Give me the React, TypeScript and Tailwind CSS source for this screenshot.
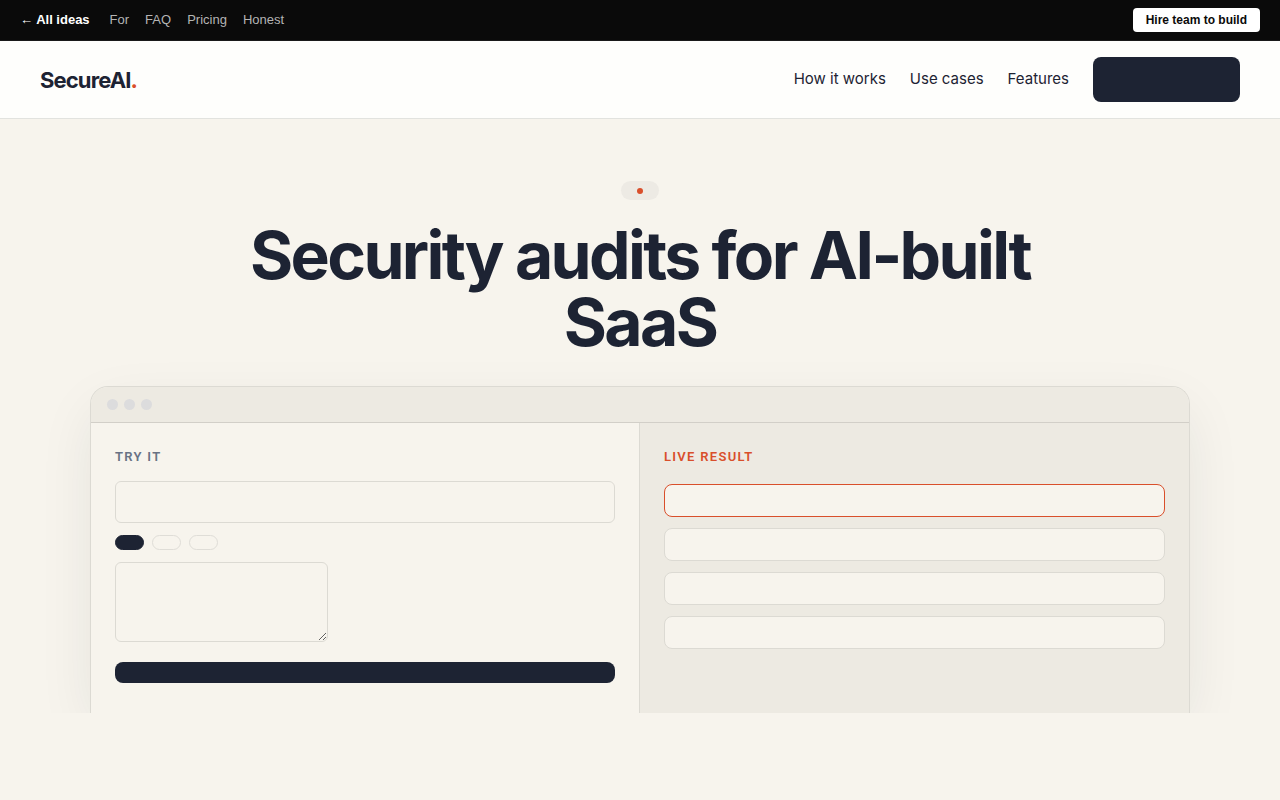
import React from 'react'

const topLinks = ['For', 'FAQ', 'Pricing', 'Honest'];
const navLinks = ['How it works', 'Use cases', 'Features'];
const chips = ['Repository', 'Website', 'API'];
const results = ['Critical', 'High', 'Medium', 'Low'];

const TopBar = () => {
    return (
        <div className="flex items-center justify-between border-b border-[#1a1a1a] bg-[#0a0a0a] px-5 py-2 font-['Liberation_Sans',sans-serif] text-[13px] leading-6">
            <div className="flex items-center gap-4">
                <a href="#" className="mr-1 font-bold text-white">← All ideas</a>
                {topLinks.map((link) => (
                    <a key={link} href="#" className="text-[#b4b4b4]">{link}</a>
                ))}
            </div>
            <a href="#" className="rounded bg-white px-[13px] text-xs leading-6 font-bold text-[#0a0a0a]">Hire team to build</a>
        </div>
    )
}

const Navbar = () => {
    return (
        <header className="flex items-center justify-between border-b border-[#e2e3df] bg-[#fefefc] px-10 py-4">
            <a href="#" className="text-[22px] leading-7 font-bold tracking-[-0.04em]">
                SecureAI<span className="text-[#d94f2b]">.</span>
            </a>
            <nav className="flex items-center gap-6 text-[15px]">
                {navLinks.map((link) => (
                    <a key={link} href="#">{link}</a>
                ))}
                <button type="button" aria-label="Get started" className="h-[45px] w-[147px] rounded-lg bg-[#1d2333]" />
            </nav>
        </header>
    )
}

const TryPanel = () => {
    return (
        <form className="border-r border-[#dcdad3] px-6 pt-6 pb-[30px]">
            <h2 className="font-['Roboto',sans-serif] text-[13px] leading-5 font-semibold tracking-widest text-[#687284]">TRY IT</h2>
            <input
                type="text"
                aria-label="App URL"
                className="mt-[14px] block h-[42px] w-full rounded-md border border-[#dcdad3] px-3"
            />
            <div className="mt-3 flex gap-2">
                {chips.map((chip, i) => (
                    <button
                        key={chip}
                        type="button"
                        aria-label={chip}
                        className={i === 0
                            ? 'h-[15px] w-[29px] rounded-full border border-[#1d2333] bg-[#1d2333]'
                            : 'h-[15px] w-[29px] rounded-full border border-[#dfddd7]'}
                    />
                ))}
            </div>
            <textarea
                aria-label="Notes"
                className="mt-3 block h-20 w-[213px] resize rounded-md border border-[#dcdad3] p-3"
            />
            <button type="button" aria-label="Run audit" className="mt-5 block h-[21px] w-full rounded-lg bg-[#1d2333]" />
        </form>
    )
}

const ResultPanel = () => {
    return (
        <div className="bg-[#edeae2] px-6 pt-6">
            <h2 className="font-['Roboto',sans-serif] text-[13px] leading-5 font-semibold tracking-widest text-[#d94f2b]">LIVE RESULT</h2>
            <ul className="mt-[17px] flex flex-col gap-[11px]">
                {results.map((result, i) => (
                    <li
                        key={result}
                        aria-label={result}
                        className={i === 0
                            ? 'h-[33px] rounded-lg border border-[#d94f2b] bg-[#f7f4ed]'
                            : 'h-[33px] rounded-lg border border-[#dcdad3] bg-[#f7f4ed]'}
                    />
                ))}
            </ul>
        </div>
    )
}

const App = () => {
    return (
        <div className="min-h-screen bg-[#f7f4ed] font-['Inter',sans-serif] text-[#1d2333]">
            <TopBar />
            <Navbar />
            <main className="flex flex-col items-center overflow-hidden px-10 pt-[62px]">
                <div className="flex h-[19px] items-center rounded-full bg-[#edeae4] px-4">
                    <div className="size-1.5 rounded-full bg-[#d94f2b]" />
                </div>
                <h1 className="mt-[22px] max-w-[900px] text-center text-[66px] leading-[67px] font-bold tracking-[-0.04em]">
                    Security audits for AI-built SaaS
                </h1>
                <div className="mt-[30px] w-full max-w-[1100px] overflow-hidden rounded-t-[18px] border border-b-0 border-[#dcdad3] bg-[#f7f4ed] shadow-[0_20px_60px_-8px_rgba(29,35,51,0.1)]">
                    <div className="flex h-9 items-center gap-1.5 border-b border-[#d2cfc8] bg-[#edeae2] px-4">
                        <span className="size-[11px] rounded-full bg-[#dcdcdd]" />
                        <span className="size-[11px] rounded-full bg-[#dcdcdd]" />
                        <span className="size-[11px] rounded-full bg-[#dcdcdd]" />
                    </div>
                    <div className="grid grid-cols-2">
                        <TryPanel />
                        <ResultPanel />
                    </div>
                </div>
            </main>
        </div>
    )
}

export default App
